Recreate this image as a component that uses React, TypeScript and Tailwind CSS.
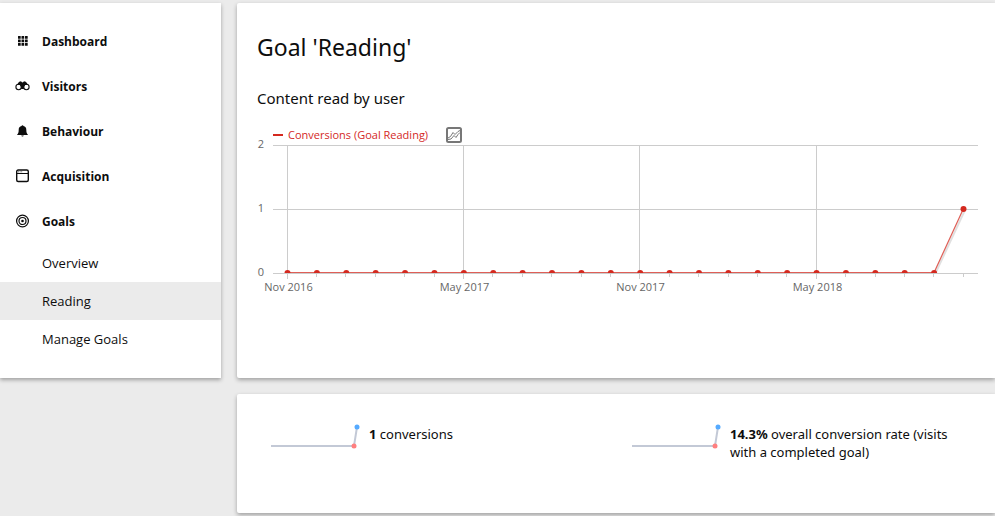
import type { ReactNode } from "react";

const ink = "#0d0d0d";

function GridIcon() {
  return (
    <svg width="15" height="15" viewBox="0 0 15 15" fill={ink} aria-hidden="true">
      {[3, 6.5, 10].map((y) =>
        [3, 6.5, 10].map((x) => <rect key={`${x}-${y}`} x={x} y={y - 1} width="2.7" height="2.7" rx="0.3" />),
      )}
    </svg>
  );
}

function BinocularsIcon() {
  return (
    <svg width="15" height="15" viewBox="0 0 15 15" aria-hidden="true">
      <path d="M3.2 4 5 2.3l1.7.4.3.9h1l.3-.9 1.7-.4L11.8 4l1.8 3.3-4 .2-.8 2.5H6.2l-.8-2.5-4-.2z" fill={ink} />
      <circle cx="3.6" cy="8" r="2.7" fill="#fff" stroke={ink} strokeWidth="1.1" />
      <circle cx="11.4" cy="8" r="2.7" fill="#fff" stroke={ink} strokeWidth="1.1" />
      <path d="M2.4 5.6 3.4 3.8h8.2l1 1.8-2.6.4-1.3 2.6H6.3L5 6z" fill={ink} />
    </svg>
  );
}

function BellIcon() {
  return (
    <svg width="15" height="15" viewBox="0 0 15 15" fill={ink} aria-hidden="true">
      <path d="M7.5 1.2c.6 0 .9.4.9.9 1.9.4 2.9 1.8 2.9 3.6 0 2.7.5 3.9 1.5 4.7v.7H2.2v-.7c1-.8 1.5-2 1.5-4.7 0-1.8 1-3.2 2.9-3.6 0-.5.3-.9.9-.9z" />
      <path d="M6.2 11.5h2.600c-.2.7-.6 1.1-1.3 1.100s-1.100-.4-1.300-1.100z" />
    </svg>
  );
}

function WindowIcon() {
  return (
    <svg width="15" height="15" viewBox="0 0 15 15" fill="none" stroke={ink} aria-hidden="true">
      <rect x="1.7" y="1" width="11.6" height="11.5" rx="1.5" strokeWidth="1.4" />
      <path d="M2 4.5h11" strokeWidth="1" />
      <path d="M3 2.8h4.5" strokeWidth="1" strokeDasharray="1 .6" opacity=".6" />
    </svg>
  );
}

function TargetIcon() {
  return (
    <svg width="15" height="15" viewBox="0 0 15 15" fill="none" stroke={ink} strokeWidth="1.2" aria-hidden="true">
      <circle cx="7.5" cy="7" r="5.9" />
      <circle cx="7.5" cy="7" r="3.5" />
      <circle cx="7.5" cy="7" r="1.3" fill={ink} stroke="none" />
    </svg>
  );
}

const menu: { label: string; icon: ReactNode }[] = [
  { label: "Dashboard", icon: <GridIcon /> },
  { label: "Visitors", icon: <BinocularsIcon /> },
  { label: "Behaviour", icon: <BellIcon /> },
  { label: "Acquisition", icon: <WindowIcon /> },
  { label: "Goals", icon: <TargetIcon /> },
];

const goalPages = ["Overview", "Reading", "Manage Goals"];

function Sidebar() {
  return (
    <nav className="w-[221px] shrink-0 bg-white pt-4 pb-5 font-['Open_Sans','Noto_Sans',sans-serif] shadow-[0_2px_4px_rgba(0,0,0,0.32)]">
      <ul>
        {menu.map((item) => (
          <li key={item.label}>
            <a href="#" className="flex h-[45px] items-center gap-3 pl-[15px] text-xs font-bold">
              {item.icon}
              {item.label}
            </a>
          </li>
        ))}
      </ul>
      <ul>
        {goalPages.map((page) => (
          <li key={page}>
            <a
              href="#"
              aria-current={page === "Reading" ? "page" : undefined}
              className="flex h-[38px] items-center pt-0.5 pl-[42px] text-[13px] aria-[current=page]:bg-[#ebebeb]"
            >
              {page}
            </a>
          </li>
        ))}
      </ul>
    </nav>
  );
}

const conversions = [...Array(23).fill(0), 1] as number[];
const xAt = (i: number) => 30.5 + (i * 676) / 23;
const yAt = (v: number) => 129.5 - v * 64;
const yLines = [
  { value: 2, y: 2.5 },
  { value: 1, y: 66.5 },
  { value: 0, y: 130.5 },
];
const xLabels: Record<number, string> = { 0: "Nov 2016", 6: "May 2017", 12: "Nov 2017", 18: "May 2018" };

function EvolutionChart() {
  return (
    <svg
      viewBox="0 0 721 160"
      className="block w-full overflow-visible font-['Open_Sans','Noto_Sans',sans-serif]"
      role="img"
      aria-label="Conversions by month"
    >
      <defs>
        <clipPath id="plot">
          <rect x="0" y="-10" width="721" height="140" />
        </clipPath>
      </defs>
      {yLines.map(({ value, y }) => (
        <g key={value}>
          <line x1="16" x2="721" y1={y} y2={y} stroke="#cccccc" />
          <text x="7" y={y + 2.5} textAnchor="end" fontSize="11" fill="#666">
            {value}
          </text>
        </g>
      ))}
      {conversions.map((_, i) => {
        const x = Math.round(xAt(i) - 0.8) + 0.5;
        return (
          <g key={i}>
            <line x1={x} x2={x} y1={i in xLabels ? 2 : 131} y2={i in xLabels ? 136 : 134} stroke="#cccccc" />
            {i in xLabels && (
              <text x={x + 1} y="148" textAnchor="middle" fontSize="11" fill="#666">
                {xLabels[i]}
              </text>
            )}
          </g>
        );
      })}
      <g clipPath="url(#plot)">
        <path d={`M${xAt(22) + 1} 131 L${xAt(23) + 1} 68`} stroke="#000" strokeOpacity=".12" strokeWidth="2" />
        <polyline
          points={conversions.map((v, i) => `${xAt(i)},${yAt(v)}`).join(" ")}
          fill="none"
          stroke="#d4291f"
          strokeOpacity=".75"
          strokeWidth="1.2"
        />
        {conversions.map((v, i) => (
          <circle key={i} cx={xAt(i)} cy={yAt(v) + 0.5} r="3" fill="#d4291f" />
        ))}
      </g>
    </svg>
  );
}

function Sparkline() {
  return (
    <svg width="98" height="25" viewBox="0 0 98 25" className="shrink-0" aria-hidden="true">
      <path d="M0 22H83L86 3" fill="none" stroke="#c3c9d6" strokeWidth="2" />
      <circle cx="83" cy="22" r="2.5" fill="#ff7f7f" />
      <circle cx="86" cy="3" r="2.5" fill="#55aaff" />
    </svg>
  );
}

function Metric({ value, label }: { value: string; label: string }) {
  return (
    <div className="flex flex-1 items-start pr-8">
      <Sparkline />
      <p className="pt-px text-[13px] leading-[18px]">
        <strong className="font-bold">{value}</strong> {label}
      </p>
    </div>
  );
}

const card = "rounded-l-[2px] bg-white shadow-[0_2px_4px_rgba(0,0,0,0.32)]";

export default function App() {
  return (
    <div className="flex min-h-screen items-start gap-4 overflow-hidden bg-[#ebebeb] pt-[3px] font-['Noto_Sans',sans-serif] text-[#0d0d0d]">
      <Sidebar />
      <main className="flex min-w-0 flex-1 flex-col gap-4">
        <section className={`${card} min-h-[375px] pt-7 pr-[17px] pl-5`}>
          <h1 className="text-[23px] leading-8">Goal 'Reading'</h1>
          <h2 className="mt-[23px] text-[15px] leading-6">Content read by user</h2>
          <div className="mt-[17px] flex h-4 items-center pl-4 font-['Open_Sans','Noto_Sans',sans-serif] text-[11px] text-[#d4291f]">
            <span className="mr-[5px] h-0.5 w-2.5 bg-[#d4291f]" />
            <span>Conversions (Goal Reading)</span>
            <button type="button" aria-label="Choose metrics to plot" className="ml-[18px]">
              <svg width="16" height="16" viewBox="0 0 16 16" fill="none" stroke="#777" className="block">
                <rect x="1" y="1" width="14" height="14" rx="1.5" strokeWidth="2" />
                <path d="M2 11 4.5 9.500 7 5.500 9 7.500 12 4.500 14 3.500" strokeWidth="1" />
                <path d="M2 12.500 5 12 8 8.500 10 10.500 12 7.500 14 5.500" strokeWidth="1" />
              </svg>
            </button>
          </div>
          <EvolutionChart />
        </section>
        <section className={`${card} flex min-h-[119px] pt-[30px] pr-0.5 pl-[34px]`}>
          <Metric value="1" label="conversions" />
          <Metric value="14.3%" label="overall conversion rate (visits with a completed goal)" />
        </section>
      </main>
    </div>
  );
}
